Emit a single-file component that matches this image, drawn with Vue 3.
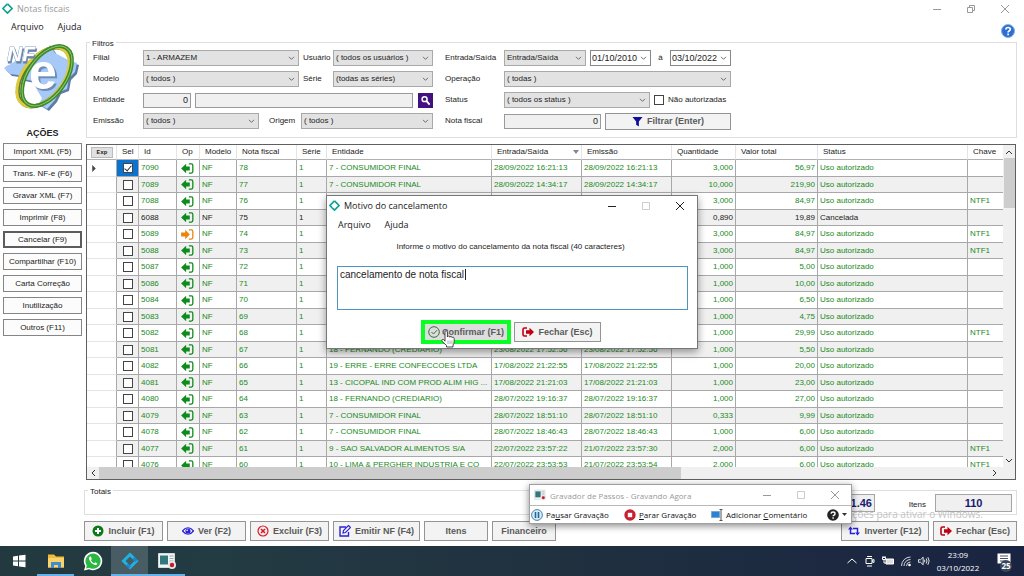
<script setup>
import { ref } from 'vue'

const actions = ['Import XML (F5)', 'Trans. NF-e (F6)', 'Gravar XML (F7)', 'Imprimir (F8)', 'Cancelar (F9)', 'Compartilhar (F10)', 'Carta Correção', 'Inutilização', 'Outros (F11)']

const row = (id, nf, ent, entrada, emissao, qtd, valor, chave = '', extra = {}) =>
  ({ id, nf, ent, entrada, emissao, qtd, valor, chave, status: 'Uso autorizado', sel: false, ...extra })

const rows = ref([
  row(7090, 78, '7 - CONSUMIDOR FINAL', '28/09/2022 16:21:13', '28/09/2022 16:21:13', '3,000', '56,97', '', { sel: true }),
  row(7089, 77, '7 - CONSUMIDOR FINAL', '28/09/2022 14:34:17', '28/09/2022 14:34:17', '10,000', '219,90'),
  row(7088, 76, '', '', '', '3,000', '84,97', 'NTF1'),
  row(6088, 75, '', '', '', '0,890', '19,89', '', { status: 'Cancelada', cancelled: true }),
  row(5089, 74, '', '', '', '3,000', '84,97', 'NTF1', { inbound: true }),
  row(5088, 73, '', '', '', '3,000', '84,97', 'NTF1'),
  row(5087, 72, '', '', '', '1,000', '5,00'),
  row(5086, 71, '', '', '', '1,000', '10,00'),
  row(5084, 70, '', '', '', '1,000', '6,50'),
  row(5083, 69, '', '', '', '1,000', '4,75'),
  row(5082, 68, '', '', '', '1,000', '29,99', 'NTF1'),
  row(5081, 67, '18 - FERNANDO (CREDIARIO)', '23/08/2022 17:52:56', '23/08/2022 17:52:56', '1,000', '5,50'),
  row(4082, 66, '19 - ERRE - ERRE CONFECCOES LTDA', '17/08/2022 21:22:55', '17/08/2022 21:22:55', '1,000', '20,00'),
  row(4081, 65, '13 - CICOPAL IND COM PROD ALIM HIG ...', '17/08/2022 21:21:03', '17/08/2022 21:21:03', '1,000', '23,00'),
  row(4080, 64, '18 - FERNANDO (CREDIARIO)', '28/07/2022 19:16:37', '28/07/2022 19:16:37', '1,000', '27,00'),
  row(4079, 63, '7 - CONSUMIDOR FINAL', '28/07/2022 18:51:10', '28/07/2022 18:51:10', '0,333', '9,99'),
  row(4078, 62, '7 - CONSUMIDOR FINAL', '28/07/2022 18:46:43', '28/07/2022 18:46:43', '1,000', '6,00'),
  row(4077, 61, '9 - SAO SALVADOR ALIMENTOS S/A', '22/07/2022 23:57:22', '21/07/2022 23:57:30', '2,000', '6,00', 'NTF1'),
  row(4076, 60, '10 - LIMA & PERGHER INDUSTRIA E CO', '22/07/2022 23:53:53', '21/07/2022 23:53:54', '2,000', '6,00', 'NTF1'),
])

const reason = ref('cancelamento de nota fiscal')
</script>

<template>
  <div class="desktop">
    <svg class="defs" aria-hidden="true">
      <symbol id="i-diamond" viewBox="0 0 12 12">
        <path d="M6 1 1 6l2.5 2.5" fill="none" stroke="#0fa3a0" stroke-width="1.9" />
        <path d="M6 1l5 5-5 5-2.500-2.500" fill="none" stroke="#13a28c" stroke-width="1.9" />
      </symbol>
      <symbol id="i-out" viewBox="0 0 14 12">
        <path d="M0 6 5.500.8v3H9.500v4.400H5.500v3z" fill="currentColor" />
        <path d="M8.500 1H11.200q1.600 0 1.600 1.600v6.800q0 1.600-1.600 1.600H8.500" fill="none" stroke="currentColor" stroke-width="1.400" />
      </symbol>
      <symbol id="i-in" viewBox="0 0 14 12">
        <path d="M9.500 6 4.500.8v3H0v4.400h4.500v3z" fill="currentColor" />
        <path d="M8.500 1H11.200q1.600 0 1.600 1.600v6.800q0 1.600-1.600 1.600H8.500" fill="none" stroke="currentColor" stroke-width="1.400" />
      </symbol>
      <symbol id="i-exit" viewBox="0 0 12 10">
        <path d="M5 1H2.500Q1 1 1 2.500v5Q1 9 2.500 9H5" fill="none" stroke="#c00010" stroke-width="1.600" />
        <path d="M12 5 7.500.8v2.500H4v3.400h3.500v2.500z" fill="#c00010" />
      </symbol>
      <symbol id="i-min" viewBox="0 0 10 10"><path d="M1 5.500h8" stroke="currentColor" /></symbol>
      <symbol id="i-max" viewBox="0 0 10 10"><path d="M1.500 1.500h7v7h-7z" fill="none" stroke="currentColor" /></symbol>
      <symbol id="i-close" viewBox="0 0 10 10"><path d="m1 1 8 8M9 1 1 9" stroke="currentColor" /></symbol>
      <symbol id="i-restore" viewBox="0 0 10 10"><path d="M1.500 3.500h5v5h-5zM3.500 3V1.500h5v5H7" fill="none" stroke="currentColor" /></symbol>
      <symbol id="i-chev" viewBox="0 0 8 6"><path d="m1 1 3 3 3-3" fill="none" stroke="currentColor" /></symbol>
      <symbol id="i-rec" viewBox="0 0 18 16">
        <path d="M.5.500h16v14H.500z" fill="#f2f5f5" stroke="#d4dadb" />
        <path d="M2 2.500h8v9H2z" fill="#34777d" />
        <path d="M11.500 3h4M11.500 5.500h4M11.500 8h4" stroke="#9ba8ac" />
        <circle cx="14" cy="12" r="4" fill="#e5e5e5" /><circle cx="14" cy="12" r="2.200" fill="#c8192c" />
      </symbol>
    </svg>

    <header class="titlebar main-title">
      <svg class="s11"><use href="#i-diamond" /></svg>
      <span class="grow">Notas fiscais</span>
      <button aria-label="Minimizar"><svg class="s10"><use href="#i-min" /></svg></button>
      <button aria-label="Restaurar"><svg class="s10"><use href="#i-restore" /></svg></button>
      <button aria-label="Fechar"><svg class="s10"><use href="#i-close" /></svg></button>
    </header>
    <nav class="menu">
      <button>Arquivo</button><button>Ajuda</button>
      <button class="help" aria-label="Ajuda do sistema">
        <svg viewBox="0 0 14 14"><circle cx="7" cy="7" r="6.500" fill="#2d6fd0" stroke="#84aee6" /><path d="M4.800 5.500Q5 3.500 7.100 3.500q2.200 0 2.200 1.800 0 1-1.200 1.700-1 .6-1 1.500M7.100 9.500v1.700" fill="none" stroke="#fff" stroke-width="1.700" /></svg>
      </button>
    </nav>

    <div class="body">
      <aside class="side">
        <svg class="logo" viewBox="0 0 76 78" role="img" aria-label="NF-e">
          <path d="M5 25 13 20l9 2 9-5 9-2 6-10 5 8 13 7 9 3-2 9-6 6-2 11-8 3-4 8-8 9-8-5 3-6-5-8-4-9-10-2-5-4-8-1-6-6 4-3z" fill="#5c7ca8" transform="translate(2 2)" />
          <path d="M5 25 13 20l9 2 9-5 9-2 6-10 5 8 13 7 9 3-2 9-6 6-2 11-8 3-4 8-8 9-8-5 3-6-5-8-4-9-10-2-5-4-8-1-6-6 4-3z" fill="#a6c9f7" />
          <ellipse cx="40" cy="37" rx="20" ry="34" transform="rotate(38 40 37)" fill="none" stroke="#6d7424" stroke-width="4" />
          <ellipse cx="39" cy="37" rx="20" ry="34" transform="rotate(38 39 37)" fill="none" stroke="#dccb3c" stroke-width="3" />
          <ellipse cx="43" cy="36" rx="19" ry="34" transform="rotate(35 43 36)" fill="none" stroke="#3c8a2c" stroke-width="4" />
          <ellipse cx="43" cy="36" rx="19" ry="34" transform="rotate(35 43 36)" fill="none" stroke="#92c765" stroke-width="1" />
          <text x="3" y="21" class="logo-nf">NF</text>
          <text x="25" y="49" class="logo-e">e</text>
        </svg>
        <h2>AÇÕES</h2>
        <button v-for="a in actions" :key="a" :class="{ current: a === 'Cancelar (F9)' }">{{ a }}</button>
      </aside>

      <main class="content">
        <section class="filters" aria-labelledby="filters-title">
          <h3 id="filters-title" class="legend">Filtros</h3>
          <div class="col left">
            <div class="line">
              <label class="lb" for="filial">Filial</label>
              <span class="combo w156"><select id="filial"><option>1 - ARMAZEM</option></select><svg><use href="#i-chev" /></svg></span>
              <label class="lb2" for="usuario">Usuário</label>
              <span class="combo grow"><select id="usuario"><option>( todos os usuários )</option></select><svg><use href="#i-chev" /></svg></span>
            </div>
            <div class="line">
              <label class="lb" for="modelo">Modelo</label>
              <span class="combo w156"><select id="modelo"><option>( todos )</option></select><svg><use href="#i-chev" /></svg></span>
              <label class="lb2" for="serie">Série</label>
              <span class="combo grow"><select id="serie"><option>(todas as séries)</option></select><svg><use href="#i-chev" /></svg></span>
            </div>
            <div class="line">
              <label class="lb" for="entidade">Entidade</label>
              <input id="entidade" class="num w48" value="0">
              <input class="grow gap4" aria-label="Nome da entidade" readonly>
              <button class="search" aria-label="Pesquisar"><svg viewBox="0 0 12 12"><circle cx="5" cy="4.500" r="2.700" fill="none" stroke="#fff" stroke-width="1.600" /><path d="m7 6.500 3.500 4" stroke="#fff" stroke-width="2" /></svg></button>
            </div>
            <div class="line">
              <label class="lb" for="emissao">Emissão</label>
              <span class="combo w116"><select id="emissao"><option>( todos )</option></select><svg><use href="#i-chev" /></svg></span>
              <label class="lb3" for="origem">Origem</label>
              <span class="combo grow"><select id="origem"><option>( todos )</option></select><svg><use href="#i-chev" /></svg></span>
            </div>
          </div>
          <div class="col right">
            <div class="line">
              <label class="lb" for="es">Entrada/Saída</label>
              <span class="combo w82"><select id="es"><option>Entrada/Saída</option></select><svg><use href="#i-chev" /></svg></span>
              <span class="combo date gap4"><input aria-label="Data inicial" value="01/10/2010"><svg><use href="#i-chev" /></svg></span>
              <span class="mid">à</span>
              <span class="combo date"><input aria-label="Data final" value="03/10/2022"><svg><use href="#i-chev" /></svg></span>
            </div>
            <div class="line">
              <label class="lb" for="operacao">Operação</label>
              <span class="combo grow"><select id="operacao"><option>( todas )</option></select><svg><use href="#i-chev" /></svg></span>
            </div>
            <div class="line">
              <label class="lb" for="status">Status</label>
              <span class="combo w146"><select id="status"><option>( todos os status )</option></select><svg><use href="#i-chev" /></svg></span>
              <label class="check"><input type="checkbox">Não autorizadas</label>
            </div>
            <div class="line">
              <label class="lb" for="nota">Nota fiscal</label>
              <input id="nota" class="num w97" value="0">
              <button class="btn grow gap4"><svg class="s11" viewBox="0 0 12 12"><path d="M.5 1h11L7.500 6v5.500l-3-2V6z" fill="#101098" /></svg>Filtrar (Enter)</button>
            </div>
          </div>
        </section>

        <section class="grid">
          <div class="grid-top">
            <div class="viewport">
              <table>
                <colgroup>
                  <col class="c30"><col class="c22"><col class="c38"><col class="c23"><col class="c37"><col class="c60"><col class="c30"><col class="c165"><col class="c90"><col class="c90"><col class="c64"><col class="c82"><col class="c150"><col>
                </colgroup>
                <thead>
                  <tr>
                    <th><button class="exp">Exp</button></th><th>Sel</th><th>Id</th><th>Op</th><th>Modelo</th><th>Nota fiscal</th><th>Série</th><th>Entidade</th>
                    <th><span class="sorted">Entrada/Saída<svg viewBox="0 0 6 4"><path d="M0 0h6L3 4z" fill="#888" /></svg></span></th>
                    <th>Emissão</th><th>Quantidade</th><th>Valor total</th><th>Status</th><th>Chave</th>
                  </tr>
                </thead>
                <tbody>
                  <tr v-for="(r, i) in rows" :key="r.id" :class="{ cancelled: r.cancelled }">
                    <td class="head"><svg v-if="i === 0" viewBox="0 0 4 8"><path d="M0 0 4 4 0 8z" fill="#444" /></svg></td>
                    <td class="sel" :class="{ on: r.sel }"><input v-model="r.sel" type="checkbox" :aria-label="'Selecionar ' + r.id"></td>
                    <td>{{ r.id }}</td>
                    <td class="op" :class="{ inbound: r.inbound }"><svg><use :href="r.inbound ? '#i-in' : '#i-out'" /></svg></td>
                    <td>NF</td><td>{{ r.nf }}</td><td>1</td><td>{{ r.ent }}</td><td>{{ r.entrada }}</td><td>{{ r.emissao }}</td>
                    <td class="r">{{ r.qtd }}</td><td class="r">{{ r.valor }}</td><td>{{ r.status }}</td><td>{{ r.chave }}</td>
                  </tr>
                </tbody>
              </table>
            </div>
            <div class="vscroll"><svg class="up"><use href="#i-chev" /></svg><i></i><svg><use href="#i-chev" /></svg></div>
          </div>
          <div class="hscroll"><svg class="lt"><use href="#i-chev" /></svg><i></i><svg class="rt"><use href="#i-chev" /></svg></div>
        </section>

        <section class="totals" aria-labelledby="totals-title">
          <h3 id="totals-title" class="legend">Totais</h3>
          <output class="total">1.46</output>
          <span class="items">Itens</span>
          <output class="count">110</output>
        </section>

        <footer class="footer">
          <button class="btn w79"><svg class="s12" viewBox="0 0 12 12"><circle cx="6" cy="6" r="5.500" fill="#0c7a18" /><path d="M6 3v6M3 6h6" stroke="#fff" stroke-width="2" /></svg>Incluir (F1)</button>
          <button class="btn w79"><svg class="s12" viewBox="0 0 12 12"><path d="M.5 6Q6-.5 11.500 6 6 12.500.5 6z" fill="#fff" stroke="#2a22d8" stroke-width="1.200" /><circle cx="6" cy="6" r="2.600" fill="#2a22d8" /><circle cx="5.200" cy="5.200" r=".8" fill="#fff" /></svg>Ver (F2)</button>
          <button class="btn w79"><svg class="s12" viewBox="0 0 12 12"><circle cx="6" cy="6" r="5" fill="none" stroke="#e01828" stroke-width="1.200" /><path d="m4 4 4 4m0-4L4 8" stroke="#e01828" stroke-width="1.600" /></svg>Excluir (F3)</button>
          <button class="btn w87"><svg class="s12" viewBox="0 0 12 12"><path d="M7 2H1v9h8.500V7" fill="none" stroke="#2a22d8" stroke-width="1.400" /><path d="m4 8 .5-2.500L9.500.500l2 2-5 5z" fill="#fff" stroke="#2a22d8" stroke-width="1.200" /></svg>Emitir NF (F4)</button>
          <button class="btn w64">Itens</button>
          <button class="btn w64">Financeiro</button>
          <span class="grow"></span>
          <button class="btn w88"><svg class="s12" viewBox="0 0 12 10"><path d="M2.500 2v5.500H7M9.500 8V2.500H5" fill="none" stroke="#2a22d8" stroke-width="1.500" /><path d="M0 3.500 2.500.5 5 3.500zM7 6.500h5L9.500 9.500z" fill="#2a22d8" /></svg>Inverter (F12)</button>
          <button class="btn w84"><svg class="s12"><use href="#i-exit" /></svg>Fechar (Esc)</button>
        </footer>
      </main>
    </div>

    <div class="watermark">Acesse Configurações para ativar o Windows.</div>

    <section class="dialog" role="dialog" aria-labelledby="dlg-title">
      <header class="titlebar">
        <svg class="s11"><use href="#i-diamond" /></svg>
        <span id="dlg-title" class="grow">Motivo do cancelamento</span>
        <button aria-label="Minimizar"><svg class="s10"><use href="#i-min" /></svg></button>
        <button aria-label="Maximizar" disabled><svg class="s10"><use href="#i-max" /></svg></button>
        <button aria-label="Fechar"><svg class="s10"><use href="#i-close" /></svg></button>
      </header>
      <nav class="menu"><button>Arquivo</button><button>Ajuda</button></nav>
      <label for="motivo">Informe o motivo do cancelamento da nota fiscal (40 caracteres)</label>
      <div class="memo"><textarea id="motivo" v-model="reason" spellcheck="false"></textarea><i class="caret"></i></div>
      <div class="dlg-actions">
        <button class="btn confirm"><svg class="s12" viewBox="0 0 12 12"><circle cx="6" cy="6" r="5.300" fill="none" stroke="#39703c" /><path d="m3.500 6 2 2 3.500-3.800" fill="none" stroke="#39703c" /></svg>Confirmar (F1)</button>
        <button class="btn close"><svg class="s12"><use href="#i-exit" /></svg>Fechar (Esc)</button>
      </div>
      <svg class="hand" viewBox="0 0 14 18"><path d="M4 10.500V2Q4 .7 5.200.700T6.400 2v5q0-1 1.200-1t1.200 1.200q.2-.8 1.200-.7t1.100 1.200q.3-.6 1.200-.4t.9 1.300v3.200q0 1.700-1.200 3.200v2H5.500v-1.600L1.200 11.500Q.3 10 1.400 9.400t2.600 1.800z" fill="#fff" stroke="#333" stroke-width=".9" /><path d="M7 10.500v3.500M9 10.500v3.500M11 10.500v3.500" stroke="#777" stroke-width=".6" /></svg>
    </section>

    <section class="recorder" aria-labelledby="rec-title">
      <header class="titlebar">
        <svg class="s12"><use href="#i-rec" /></svg>
        <span id="rec-title" class="grow">Gravador de Passos - Gravando Agora</span>
        <button aria-label="Minimizar"><svg class="s10"><use href="#i-min" /></svg></button>
        <button aria-label="Maximizar" disabled><svg class="s10"><use href="#i-max" /></svg></button>
        <button aria-label="Fechar"><svg class="s10"><use href="#i-close" /></svg></button>
      </header>
      <div class="tools">
        <button class="t1"><svg class="s12" viewBox="0 0 12 12"><circle cx="6" cy="6" r="5.400" fill="#d8ecf8" stroke="#4885aa" /><path d="M4.500 3v6M7.500 3v6" stroke="#1c6797" stroke-width="1.600" /></svg><span>Pa<u>u</u>sar Gravação</span></button>
        <button class="t2"><svg class="s12" viewBox="0 0 12 12"><circle cx="6" cy="6" r="5.700" fill="#c91f30" /><path d="M3.800 3.800h4.400v4.400H3.800z" fill="#fff" /></svg><span><u>P</u>arar Gravação</span></button>
        <button class="t3"><svg class="s12" viewBox="0 0 12 12"><path d="M.5 2.500h8v6h-8z" fill="#2b83d5" stroke="#7da8cb" /><path d="M8.500.500h3M8.500 11.500h3M10 .5v11" stroke="#555" /></svg><span>Adicionar <u>C</u>omentário</span></button>
        <button class="t4" aria-label="Ajuda"><svg class="s12" viewBox="0 0 12 12"><circle cx="6" cy="6" r="5.800" fill="#222" /><path d="M4 4.700Q4.200 3 6.100 3T8 4.700Q8 5.600 7 6.200q-.9.500-.9 1.100M6.100 8.200v1.500" fill="none" stroke="#fff" stroke-width="1.400" /></svg><svg class="drop" viewBox="0 0 5 3"><path d="M0 0h5L2.500 3z" fill="#333" /></svg></button>
      </div>
    </section>

    <footer class="taskbar">
      <button aria-label="Iniciar"><svg viewBox="0 0 20 20"><path d="M4 5.500 9 4.800v4.700H4zM10 4.600l6.500-.9v5.800H10zM4 10.500h5v4.700l-5-.7zM10 10.500h6.500v5.800l-6.500-.9z" fill="#fff" /></svg></button>
      <button class="open" aria-label="Explorador de Arquivos"><svg viewBox="0 0 20 20"><path d="M2 3.500h6l2 2h8v11H2z" fill="#f5b93a" /><path d="M2 7h16v9.500H2z" fill="#fad36a" /><path d="M5 17v-6h10v6h-3v-3H8v3z" fill="#3d8ed0" /></svg></button>
      <button aria-label="WhatsApp"><svg viewBox="0 0 20 20"><path d="M1 19.500 2.300 15A9.200 9.200 0 1 1 6 18.300z" fill="#fff" /><path d="M3 17.500 3.800 14.500A7.600 7.600 0 1 1 6.200 16.700z" fill="#2cb742" /><path d="M7 5.500q-1.600 1-.9 3 1.600 4 5.600 5.500 2 .4 2.700-1.500l-2.200-1.300-1.100 1.200q-2.200-1-3.200-3.100l.9-1.200-1-2.500z" fill="#fff" /></svg></button>
      <button class="open active" aria-label="Notas fiscais"><svg viewBox="0 0 20 20"><path d="m10 3.500 6.500 6.500-6.500 6.500L3.500 10z" fill="none" stroke="#20b3e2" stroke-width="3" /><path d="m10 16.500-3-3M16.500 10l-3-3" stroke="#1687d4" stroke-width="3" /></svg></button>
      <button class="open" aria-label="Gravador de Passos"><svg class="recicon"><use href="#i-rec" /></svg></button>
      <span class="grow"></span>
      <div class="tray">
        <svg viewBox="0 0 12 12"><path d="m1.500 8 4.500-4 4.500 4" fill="none" stroke="#fff" /></svg>
        <svg viewBox="0 0 12 12"><path d="M2 3.500h6v5H2zM8 5.500l2-1v3l-2-1M3 1.500h5M3 11h5" fill="none" stroke="#fff" /></svg>
        <svg viewBox="0 0 12 12"><path d="M4 4h7.500v5H4z" fill="#ddd" stroke="#fff" /><path d="M.5 2.500h3v2h-3zM2 4.500V8h2M1 1v1.500M3 1v1.500" fill="none" stroke="#fff" /></svg>
        <svg viewBox="0 0 12 12"><path d="M1.500 11A9 9 0 0 1 10.500 2M4 11a6.500 6.500 0 0 1 6.500-6.500M6.500 11a4 4 0 0 1 4-4" fill="none" stroke="#d0d6df" /><circle cx="9.500" cy="10" r="1.300" fill="#fff" /></svg>
        <svg viewBox="0 0 14 12"><path d="M.5 4.500H3l3-3v9l-3-3H.500zM7.500 4.500q1 1.500 0 3M9.500 3q2 3 0 6M11.500 1.500q3 4.500 0 9" fill="none" stroke="#fff" /></svg>
      </div>
      <time class="clock">23:09<br>03/10/2022</time>
      <button class="notif" aria-label="Notificações"><svg viewBox="0 0 14 14"><path d="M.5.500h13v10H9l-3 3v-3H.500z" fill="#fff" /><path d="M3 3h8M3 5.500h8M3 8h5" stroke="#49516a" /></svg><b>25</b></button>
    </footer>
  </div>
</template>

<style>
html, body { margin: 0; background: #fff; }
</style>

<style scoped>
* { box-sizing: border-box; }
.desktop { position: relative; display: flex; flex-direction: column; height: 100vh; min-height: 480px; overflow: hidden; background: #fff; color: #222; font: 8px/12px "Liberation Sans", Arial, sans-serif; }
.defs { position: absolute; width: 0; height: 0; }
button, input, select, textarea { margin: 0; padding: 0; font: inherit; color: inherit; border: 0; border-radius: 0; background: none; outline: 0; min-width: 0; }
svg { display: block; flex: none; }
h2, h3 { margin: 0; font: inherit; }
.grow { flex: 1; min-width: 0; }
.s10 { width: 10px; height: 10px; }
.s11 { width: 11px; height: 11px; }
.s12 { width: 12px; height: 12px; }

.titlebar { display: flex; flex: none; align-items: center; height: 17px; padding-left: 2px; gap: 4px; font: 9px/13px "Open Sans", "Noto Sans", sans-serif; color: #999; }
.main-title { padding-right: 4px; }
.titlebar button { display: flex; justify-content: center; width: 30px; }
.menu { display: flex; flex: none; height: 18px; padding-left: 11px; gap: 14px; font: 9px/13px "Open Sans", "Noto Sans", sans-serif; align-items: center; }
.help { width: 14px; height: 14px; margin: 9px 9px 0 auto; }

.body { display: flex; flex: 1; min-height: 0; }
.side { display: flex; flex-direction: column; flex: none; width: 84px; padding: 5px 2px 0 3px; gap: 5px; }
.logo { width: 76px; height: 78px; margin-left: 1px; }
.logo-nf { font: italic bold 21px "Liberation Sans", sans-serif; fill: #fff; stroke: #8fa6c2; stroke-width: 1; paint-order: stroke; filter: drop-shadow(1px 2px 0 #6784a8); }
.logo-e { font: bold 50px "Liberation Sans", sans-serif; fill: #fff; filter: drop-shadow(2px 2px 0 #6c8cb5); }
.side h2 { margin: 3px 0 -2px; text-align: center; font: bold 9px/14px "Liberation Sans", sans-serif; }
.side button { height: 17px; border: 1px solid #858585; background: #fcfcfc; text-align: center; white-space: nowrap; }
.side button.current { border: 2px solid #5c5c5c; }

.content { display: flex; flex-direction: column; flex: 1; min-width: 0; padding-right: 7px; }
.filters { position: relative; display: flex; flex: none; margin: 7px 0 0 2px; height: 96px; padding: 7px 0 0 6px; gap: 12px; border: 1px solid #dedede; }
.legend { position: absolute; top: -5px; left: 3px; padding: 0 2px; background: #fff; }
.col { display: flex; flex-direction: column; gap: 5px; }
.left { width: 340px; }
.right { width: 286px; }
.line { display: flex; align-items: center; height: 16px; }
.left .lb { width: 50px; flex: none; }
.right .lb { width: 59px; flex: none; }
.lb2 { width: 34px; padding-left: 4px; flex: none; }
.lb3 { width: 42px; padding-left: 10px; flex: none; }
.combo { position: relative; display: flex; height: 16px; border: 1px solid #a9a9a9; background: #e2e2e2; }
.combo select, .combo input { width: 100%; padding-left: 2px; appearance: none; line-height: 14px; }
.combo svg { position: absolute; right: 3px; top: 5px; width: 7px; height: 5px; color: #555; pointer-events: none; }
.date { width: 61px; background: #fff; border-color: #888; }
.date input { padding-left: 1px; font-size: 9px; }
.mid { flex: 1; text-align: center; }
.line > input { height: 15px; border: 1px solid #9a9a9a; background: #f0f0f0; }
.num { flex: none; padding-right: 2px; text-align: right; font-size: 9px; }
.gap4 { margin-left: 4px; }
.search { display: grid; place-items: center; width: 15px; height: 15px; margin-left: 5px; background: #42107f; }
.search svg { width: 11px; height: 11px; }
.check { display: flex; align-items: center; gap: 4px; margin-left: 4px; white-space: nowrap; }
input[type="checkbox"] { appearance: none; width: 10px; height: 10px; border: 1px solid #444; background: #fff; }
.w156 { width: 156px; flex: none; }
.w116 { width: 116px; flex: none; }
.w146 { width: 146px; flex: none; }
.w82 { width: 82px; flex: none; }
.w48 { width: 48px; }
.w97 { width: 97px; }
.w79 { width: 79px; }
.w87 { width: 87px; }
.w64 { width: 64px; }
.w88 { width: 88px; }
.w84 { width: 84px; }
.btn { display: flex; align-items: center; justify-content: center; gap: 4px; height: 20px; border: 1px solid #949494; background: #f3f3f3; color: #5a5a5a; font-weight: bold; font-size: 9px; white-space: nowrap; }
.line .btn { height: 17px; }

.grid { display: flex; flex-direction: column; flex: 1; min-height: 0; margin: 6px 1px 0 2px; border: 1px solid #5f5f5f; }
.grid-top { display: flex; flex: 1; min-height: 0; }
.viewport { flex: 1; min-width: 0; overflow: hidden; }
table { width: 100%; table-layout: fixed; border-collapse: separate; border-spacing: 0; }
.c22 { width: 22px; }
.c23 { width: 23px; }
.c30 { width: 30px; }
.c37 { width: 37px; }
.c38 { width: 38px; }
.c60 { width: 60px; }
.c64 { width: 64px; }
.c82 { width: 82px; }
.c90 { width: 90px; }
.c150 { width: 150px; }
.c165 { width: 165px; }
th { height: 15px; padding: 0 0 0 5px; text-align: left; font-weight: normal; white-space: nowrap; border-bottom: 1px solid #b0b0b0; border-right: 1px solid #e4e4e4; }
.exp { display: block; width: 22px; height: 11px; margin-left: -1px; border: 1px solid #bbb; background: #e1e1e1; font: bold 6px/9px "Liberation Mono", monospace; }
.sorted { display: flex; align-items: center; justify-content: space-between; padding-right: 2px; }
.sorted svg { width: 6px; height: 4px; }
td { height: 16px; padding: 0 2px; overflow: hidden; white-space: nowrap; line-height: 12px; color: #198a22; border-right: 1px solid #a8a8a8; border-bottom: 1px solid #a8a8a8; }
tr:nth-child(odd) td { height: 17px; }
tr:nth-child(even) td { background: #f0f0f0; }
tr.cancelled td { color: #222; }
td:last-child, th:last-child { border-right: 0; }
tr .head { background: #fff !important; padding-left: 5px; border-bottom-color: #e4e4e4; }
.head svg { width: 4px; height: 7px; }
.sel input { display: block; margin: 0 auto 0 4px; }
tr .sel.on { background: #0b72d0; }
.sel.on input { position: relative; }
.sel.on input::after { content: ""; position: absolute; left: 2px; top: 0; width: 3px; height: 6px; border: solid #333; border-width: 0 1px 1px 0; transform: rotate(40deg); }
td.op { padding: 0 0 0 4px; }
.op svg { width: 13px; height: 11px; color: #0d8c1b; }
.op.inbound svg { color: #ee820c; }
td.r { text-align: right; }
.vscroll { display: flex; flex-direction: column; align-items: center; flex: none; width: 12px; padding: 4px 0 3px; background: #f0f0f0; }
.vscroll i { width: 11px; height: 50px; margin: 3px 0 auto; background: #cdcdcd; }
.vscroll svg, .hscroll svg { width: 8px; height: 6px; color: #333; }
.vscroll .up { transform: rotate(180deg); }
.hscroll { display: flex; align-items: center; flex: none; height: 12px; padding: 0 16px 0 2px; background: #f0f0f0; }
.hscroll i { width: 64%; height: 12px; margin: 0 auto 0 2px; background: #cdcdcd; }
.lt { transform: rotate(90deg); }
.rt { transform: rotate(-90deg); }

.totals { position: relative; display: flex; align-items: center; justify-content: flex-end; flex: none; height: 25px; margin: 10px 0 6px; padding-right: 4px; border: 1px solid #dedede; }
.totals output { height: 18px; border: 1px solid #a5a5a5; background: #f0f0f0; color: #191970; font: bold 11px/16px "Liberation Sans", sans-serif; }
.total { width: 90px; padding-right: 2px; text-align: right; }
.items { width: 60px; padding: 4px 9px 0 0; text-align: right; }
.count { width: 77px; text-align: center; }
.footer { display: flex; flex: none; gap: 4px; margin-bottom: 5px; }

.watermark { position: absolute; right: 41px; bottom: 54px; font: 10px/16px "Open Sans", sans-serif; color: #c4c4c4; }

.dialog { position: absolute; left: 326px; top: 195px; width: 372px; padding-bottom: 4px; border: 1px solid #777; background: #fff; box-shadow: 0 3px 8px #0006; }
.dialog .titlebar { height: 19px; padding-right: 2px; color: #222; }
.titlebar button:disabled { color: #ccc; }
.dialog > label { display: block; margin: 8px 0 13px; padding-right: 3px; text-align: center; }
.memo { position: relative; margin: 0 9px 0 10px; }
.memo textarea { display: block; width: 100%; height: 44px; padding: 2px; border: 1px solid #4f93bf; font-size: 10px; resize: none; overflow: hidden; }
.caret { position: absolute; left: 128px; top: 3px; width: 1px; height: 11px; background: #222; }
.dlg-actions { display: flex; align-items: center; justify-content: center; gap: 3px; margin-top: 10px; padding-right: 2px; }
.confirm { width: 90px; height: 24px; border: 4px solid #0aff25; background: #ddd; gap: 2px; }
.close { width: 87px; }
.hand { position: absolute; left: 114px; top: 134px; width: 14px; height: 18px; }

.recorder { position: absolute; right: 172px; bottom: 52px; width: 323px; border: 1px solid #a0a0a0; background: #fff; box-shadow: 0 2px 7px #0007; }
.recorder .titlebar { height: 20px; padding: 0 1px 0 4px; font-size: 8px; }
.tools { display: flex; align-items: center; height: 18px; border-top: 1px solid #b8b8b8; padding-left: 1px; font: 8px/12px "Open Sans", sans-serif; color: #111; }
.tools button { display: flex; align-items: center; gap: 3px; white-space: nowrap; }
.t1 { width: 93px; }
.t2 { width: 87px; }
.t3 { width: 116px; }
.tools u { text-underline-offset: 1px; }
.drop { width: 5px; height: 3px; }

.taskbar { position: relative; display: flex; flex: none; align-items: stretch; height: 30px; padding-right: 2px; background: linear-gradient(90deg, #22393f 0%, #233b43 22%, #20303f 55%, #192442 100%); color: #fff; }
.taskbar > button { display: grid; place-items: center; width: 37px; border-bottom: 2px solid transparent; padding-top: 2px; }
.taskbar > button svg { width: 20px; height: 20px; }
.taskbar > button .recicon { width: 18px; height: 16px; }
.taskbar > .open { border-bottom-color: #65b1ea; }
.taskbar > .active { background: #485c63; }
.tray { display: flex; align-items: center; gap: 6px; }
.tray svg { width: 12px; height: 12px; }
.clock { width: 56px; text-align: center; padding-top: 2px; font: 8px/13px "Open Sans", sans-serif; }
.taskbar > .notif { position: relative; width: 36px; padding-top: 0; }
.taskbar > .notif svg { width: 14px; height: 14px; }
.notif b { position: absolute; left: 14px; top: 14px; width: 12px; height: 12px; border-radius: 6px; background: #39465a; font: bold 8px/12px "Open Sans", sans-serif; text-align: center; }
</style>
